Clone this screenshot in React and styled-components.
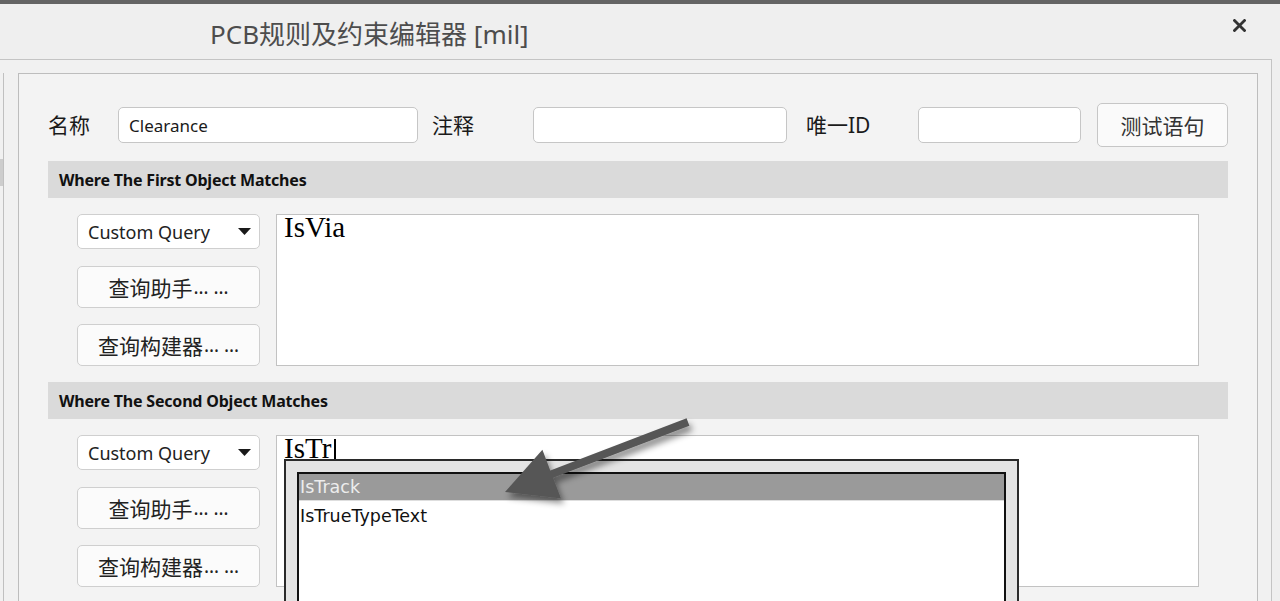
import React from "react";
import styled, { createGlobalStyle } from "styled-components";

const Global = createGlobalStyle`
  html, body { margin: 0; padding: 0; background: #f0f0f0; overflow: hidden; }
  * { box-sizing: border-box; }
`;

const Window = styled.div`
  position: relative;
  width: 1280px;
  height: 601px;
  overflow: hidden;
  background: #efefef;
  border-top: 4px solid #646464;
  font-family: "Noto Sans", "Noto Sans CJK SC", sans-serif;
  color: #1a1a1a;
`;

const TitleBar = styled.div`
  height: 55px;
  display: flex;
  justify-content: space-between;
  padding: 0 34px 0 210px;
`;

const Title = styled.div`
  align-self: center;
  font-size: 26px;
  color: #4d4d4d;
  padding-top: 2px;
  white-space: nowrap;
`;

const CloseBtn = styled.div`
  margin-top: 15px;
  width: 13px;
  height: 13px;
  display: flex;
`;

const Body = styled.div`
  display: flex;
  width: 1272px;
  height: 542px;
  border-top: 1px solid #c4c4c4;
  border-right: 1px solid #c4c4c4;
  padding-top: 13px;
  background: #f1f1f1;
`;

const LeftStrip = styled.div`
  flex: none;
  width: 4px;
  border-right: 1px solid #c0c0c0;
  padding-top: 86px;
`;

const StripMarker = styled.div`
  height: 27px;
  background: #cdcdcd;
`;

const Panel = styled.div`
  flex: none;
  margin-left: 14px;
  width: 1240px;
  border: 1px solid #bdbdbd;
  border-bottom: none;
  background: #f3f3f3;
  padding: 29px 29px 0 29px;
`;

const TopRow = styled.div`
  display: flex;
  align-items: center;
  height: 44px;
`;

const Label = styled.div`
  flex: none;
  width: ${(p) => p.$w}px;
  margin-left: ${(p) => p.$ml || 0}px;
  font-size: 21px;
  color: #1a1a1a;
  white-space: nowrap;
  margin-top: -2px;
`;

const TextInput = styled.div`
  flex: none;
  width: ${(p) => p.$w}px;
  height: 36px;
  border: 1px solid #c6c6c6;
  border-radius: 5px;
  background: #fff;
  padding-left: 10px;
  font-size: 17px;
  display: flex;
  align-items: center;
  color: #1a1a1a;
`;

const TestButton = styled.div`
  flex: none;
  margin-left: 16px;
  width: 131px;
  height: 44px;
  border: 1px solid #c6c6c6;
  border-radius: 5px;
  background: #fafafa;
  font-size: 21px;
  color: #333;
  display: flex;
  align-items: center;
  justify-content: center;
`;

const SectionHeader = styled.div`
  margin-top: ${(p) => p.$mt}px;
  height: 37px;
  background: #dadada;
  padding-left: 11px;
  display: flex;
  align-items: center;
  font-size: 16px;
  font-weight: 700;
  color: #111;
  letter-spacing: -0.2px;
`;

const Section = styled.div`
  display: flex;
  gap: 16px;
  margin-top: 16px;
  padding: 0 29px;
  height: 152px;
`;

const SideColumn = styled.div`
  flex: none;
  width: 183px;
  display: flex;
  flex-direction: column;
`;

const Combo = styled.div`
  height: 35px;
  border: 1px solid #cfcfcf;
  border-radius: 5px;
  background: #fff;
  padding: 0 8px 0 10px;
  display: flex;
  align-items: center;
  justify-content: space-between;
  font-size: 18px;
  color: #222;
`;

const QueryButton = styled.div`
  margin-top: ${(p) => p.$mt}px;
  height: 42px;
  border: 1px solid #cfcfcf;
  border-radius: 5px;
  background: #fbfbfb;
  display: flex;
  align-items: center;
  justify-content: center;
  font-size: 21px;
  color: #222;
  white-space: nowrap;
`;

const Ellipsis = styled.span`
  font-family: "Noto Sans", sans-serif;
  font-size: 19px;
  letter-spacing: 5px;
  margin-left: 1px;
  margin-right: -5px;
`;

const QueryBox = styled.div`
  position: relative;
  flex: 1;
  height: 152px;
  border: 1px solid #c2c2c2;
  background: #fff;
  padding: 0 7px;
  font-family: "Liberation Serif", serif;
  font-size: 29px;
  line-height: 24px;
  color: #000;
`;

const Caret = styled.span`
  display: inline-block;
  width: 2px;
  height: 22px;
  margin-left: 3px;
  background: #000;
  vertical-align: -3px;
`;

const Popup = styled.div`
  position: absolute;
  left: 7px;
  top: 23px;
  width: 735px;
  height: 200px;
  border: 2px solid #2a2a2a;
  background: #e4e4e4;
  padding: 11px 11px 0 11px;
  z-index: 2;
`;

const PopupList = styled.div`
  height: 100%;
  border: 2px solid #111;
  border-bottom: none;
  background: #fff;
`;

const PopupItem = styled.div`
  height: ${(p) => (p.$active ? 27 : 29)}px;
  padding-left: 1px;
  display: flex;
  align-items: center;
  font-family: "DejaVu Sans", sans-serif;
  font-size: 17.5px;
  color: ${(p) => (p.$active ? "#ededed" : "#111")};
  background: ${(p) => (p.$active ? "#9a9a9a" : "#fff")};
  border-bottom: ${(p) => (p.$active ? "1px solid #dedede" : "none")};
`;

const Overlay = styled.svg`
  position: absolute;
  left: 0;
  top: -4px;
  width: 1280px;
  height: 601px;
  pointer-events: none;
  z-index: 5;
`;

const DropTriangle = () => (
  <svg width="13" height="7" viewBox="0 0 13 7">
    <polygon points="0,0 13,0 6.5,7" fill="#1a1a1a" />
  </svg>
);

function QuerySection({ text, caret, popup }) {
  return (
    <Section>
      <SideColumn>
        <Combo>
          <span>Custom Query</span>
          <DropTriangle />
        </Combo>
        <QueryButton $mt={17}>
          查询助手<Ellipsis>……</Ellipsis>
        </QueryButton>
        <QueryButton $mt={16}>
          查询构建器<Ellipsis>……</Ellipsis>
        </QueryButton>
      </SideColumn>
      <QueryBox>
        {text}
        {caret && <Caret />}
        {popup && (
          <Popup>
            <PopupList>
              <PopupItem $active>IsTrack</PopupItem>
              <PopupItem>IsTrueTypeText</PopupItem>
            </PopupList>
          </Popup>
        )}
      </QueryBox>
    </Section>
  );
}

export default function App() {
  return (
    <>
      <Global />
      <Window>
        <TitleBar>
          <Title>PCB规则及约束编辑器 [mil]</Title>
          <CloseBtn>
            <svg width="13" height="13" viewBox="0 0 13 13">
              <path d="M1.5 1.5 L11.5 11.5 M11.5 1.5 L1.5 11.5" stroke="#333" strokeWidth="2.8" strokeLinecap="square" />
            </svg>
          </CloseBtn>
        </TitleBar>
        <Body>
          <LeftStrip>
            <StripMarker />
          </LeftStrip>
          <Panel>
            <TopRow>
              <Label $w={70}>名称</Label>
              <TextInput $w={300}>Clearance</TextInput>
              <Label $w={101} $ml={14}>注释</Label>
              <TextInput $w={254} />
              <Label $w={112} $ml={19}>唯一ID</Label>
              <TextInput $w={163} />
              <TestButton>测试语句</TestButton>
            </TopRow>
            <SectionHeader $mt={14}>Where The First Object Matches</SectionHeader>
            <QuerySection text="IsVia" />
            <SectionHeader $mt={16}>Where The Second Object Matches</SectionHeader>
            <QuerySection text="IsTr" caret popup />
          </Panel>
        </Body>
        <Overlay viewBox="0 0 1280 601">
          <defs>
            <filter id="arrowShadow" x="-20%" y="-40%" width="140%" height="180%">
              <feDropShadow dx="3" dy="5" stdDeviation="3" floodColor="#000" floodOpacity="0.45" />
            </filter>
          </defs>
          <polygon
            points="686.6,418.3 550.3,470.4 542.4,449.8 505,492 561,498.4 553.1,477.8 689.4,425.7"
            fill="#575757"
            filter="url(#arrowShadow)"
          />
        </Overlay>
      </Window>
    </>
  );
}
